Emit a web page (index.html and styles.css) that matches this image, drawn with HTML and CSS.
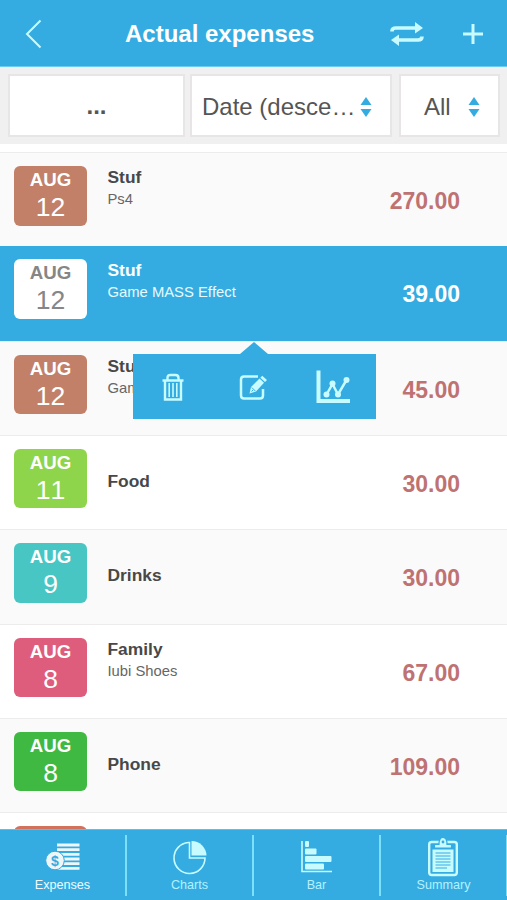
FILE: index.html
```html
<!DOCTYPE html>
<html lang="en">
<head>
  <meta charset="UTF-8">
  <meta name="viewport" content="width=device-width, initial-scale=1.0">
  <title>Actual expenses</title>
  <link rel="stylesheet" href="styles.css">
</head>
<body>
  <div class="header">
    <svg class="back" width="18" height="30" viewBox="0 0 18 30"><path d="M15.500 1.500L2 15L15.500 28.500"/></svg>
    <h1>Actual expenses</h1>
    <svg class="repeat" width="34" height="26" viewBox="0 0 34 26">
      <path class="line" d="M2 10.500V10Q2 7 6 7H26M32 15.500Q32 19 28 19H9"/>
      <path class="fill" d="M25 1L33 7L25 12.500ZM9 13.500L1 19L9 25Z"/>
    </svg>
    <svg class="plus" width="20" height="20" viewBox="0 0 20 20"><path d="M10 0V20M0 10H20"/></svg>
  </div>

  <div class="filters">
    <div class="box search">...</div>
    <div class="box sort">
      <span>Date (desce…</span>
      <svg width="12" height="20" viewBox="0 0 12 20"><path d="M6 0L11.500 8H0.500ZM6 20L11.500 12H0.500Z"/></svg>
    </div>
    <div class="box type">
      <span>All</span>
      <svg width="12" height="20" viewBox="0 0 12 20"><path d="M6 0L11.500 8H0.500ZM6 20L11.500 12H0.500Z"/></svg>
    </div>
  </div>

  <div class="list">
    <div class="row odd">
      <div class="date brown"><b>AUG</b><span>12</span></div>
      <div class="info"><b>Stuf</b><span>Ps4</span></div>
      <div class="amount">270.00</div>
    </div>
    <div class="row selected">
      <div class="date"><b>AUG</b><span>12</span></div>
      <div class="info"><b>Stuf</b><span>Game MASS Effect</span></div>
      <div class="amount">39.00</div>
      <div class="popup">
        <svg width="22" height="28" viewBox="0 0 22 28">
          <path class="line" stroke-width="2.400" d="M0.500 7.500H21.500M5.500 7V5Q5.500 2 8.500 2H13.500Q16.500 2 16.500 5V7M3 8V26.500H19V8"/>
          <path class="line" stroke-width="1.600" d="M7.200 10V24M11 10V24M14.800 10V24"/>
        </svg>
        <svg width="28" height="28" viewBox="0 0 28 28">
          <path class="line" stroke-width="2.500" d="M19 3.500H5Q2 3.500 2 6.500V22.500Q2 25.500 5 25.500H21Q24 25.500 24 22.500V16"/>
          <path class="fill" d="M10.500 20.500L12 14L20.500 5.500L25 9.700L17 18.500ZM21.300 4.700L23.200 2.800L28 7L26 9Z"/>
          <path class="cut" d="M12.800 14.500L16.300 18M12.500 18.500L14 17"/>
        </svg>
        <svg width="34" height="34" viewBox="0 0 34 34">
          <path class="line" stroke-width="4" d="M2.500 0.500V31H34"/>
          <path class="line" stroke-width="2.500" d="M10.500 24.500L16.500 14L22 24.500L30.500 10"/>
          <g class="fill"><circle cx="10.500" cy="24.500" r="3"/><circle cx="16.500" cy="13.500" r="3"/><circle cx="22" cy="24.500" r="3"/><circle cx="30.500" cy="10" r="3"/></g>
        </svg>
      </div>
    </div>
    <div class="row odd">
      <div class="date brown"><b>AUG</b><span>12</span></div>
      <div class="info"><b>Stuf</b><span>Game</span></div>
      <div class="amount">45.00</div>
    </div>
    <div class="row">
      <div class="date lime"><b>AUG</b><span>11</span></div>
      <div class="info single"><b>Food</b></div>
      <div class="amount">30.00</div>
    </div>
    <div class="row odd">
      <div class="date teal"><b>AUG</b><span>9</span></div>
      <div class="info single"><b>Drinks</b></div>
      <div class="amount">30.00</div>
    </div>
    <div class="row">
      <div class="date pink"><b>AUG</b><span>8</span></div>
      <div class="info"><b>Family</b><span>Iubi Shoes</span></div>
      <div class="amount">67.00</div>
    </div>
    <div class="row odd">
      <div class="date green"><b>AUG</b><span>8</span></div>
      <div class="info single"><b>Phone</b></div>
      <div class="amount">109.00</div>
    </div>
    <div class="row">
      <div class="date red"></div>
    </div>
  </div>

  <div class="tabs">
    <div class="tab active">
      <svg width="36" height="40" viewBox="0 0 36 40">
        <path class="line" stroke-width="2.800" d="M12 8H34.500M12 12.700H34.500M12 17.400H34.500M12 22H34.500M12 26.700H34.500M12 31.300H34.500"/>
        <circle class="coin" cx="10" cy="23.500" r="9.300"/>
        <text x="10" y="28.500">$</text>
      </svg>
      <span>Expenses</span>
    </div>
    <div class="tab">
      <svg width="36" height="40" viewBox="0 0 36 40">
        <path class="line" stroke-width="1.600" d="M16.500 5.500A15.500 15.500 0 1 0 33 21H17.500V5.500Z"/>
        <path class="fill" d="M19.500 4A15 15 0 0 1 34.500 18.500H19.500Z"/>
      </svg>
      <span>Charts</span>
    </div>
    <div class="tab">
      <svg width="36" height="40" viewBox="0 0 36 40">
        <path class="line" stroke-width="1.600" d="M3 4V34.500H33"/>
        <g class="fill">
          <rect x="6" y="4" width="4" height="6" rx="1"/>
          <rect x="6" y="11.500" width="11.500" height="6" rx="1"/>
          <rect x="6" y="19" width="26.500" height="6" rx="1"/>
          <rect x="6" y="26.500" width="19" height="6" rx="1"/>
        </g>
      </svg>
      <span>Bar</span>
    </div>
    <div class="tab">
      <svg width="36" height="40" viewBox="0 0 36 40">
        <rect class="line" stroke-width="2.400" x="4.200" y="5" width="27.600" height="33" rx="2.500"/>
        <rect class="fill" x="7.500" y="12.500" width="21" height="22.500"/>
        <path class="fill cutout" d="M9.500 11V7.500H14Q14 0.500 18 0.500T22 7.500H26.500V11Z"/>
        <circle class="hole" cx="18" cy="5" r="1.400"/>
        <path class="lines" d="M10.500 16H25.500M10.500 19H25.500M10.500 22H25.500M10.500 25H25.500M10.500 28H25.500M10.500 31H22"/>
      </svg>
      <span>Summary</span>
    </div>
  </div>
</body>
</html>
```
FILE: styles.css
```css
* {
  box-sizing: border-box;
}
body {
  margin: 0;
  height: 900px;
  display: flex;
  flex-direction: column;
  overflow: hidden;
  background-color: white;
  font-family: "Liberation Sans", Arial, sans-serif;
  font-kerning: none;
  color: #484848;
}
svg {
  display: block;
  flex: none;
}
.line {
  fill: none;
  stroke: #c8fbff;
}
.fill {
  fill: #c8fbff;
}

/* header */
.header {
  flex: none;
  height: 67px;
  display: flex;
  align-items: center;
  padding: 1px 24px 0 25px;
  background-color: #34ace1;
  border-bottom: 1px solid #6bcdf2;
}
.header h1 {
  margin: 0 0 0 82px;
  width: 191px;
  font-size: 24px;
  line-height: 30px;
  color: white;
  white-space: nowrap;
}
.back path {
  fill: none;
  stroke: #c8fbff;
  stroke-width: 2;
}
.repeat {
  margin-left: 74px;
}
.repeat .line {
  stroke-width: 3.6;
}
.plus {
  margin-left: auto;
}
.plus path {
  stroke: #c8fbff;
  stroke-width: 3;
}

/* filters */
.filters {
  flex: none;
  height: 77px;
  display: flex;
  padding: 7px 7px 7px 8px;
  background-color: #f1f0f0;
}
.box {
  height: 63px;
  display: flex;
  align-items: center;
  justify-content: space-between;
  background-color: white;
  border: 2px solid #e8e5e6;
  font-size: 24px;
  line-height: 28px;
  color: #555;
}
.box svg {
  fill: #34ace1;
}
.search {
  width: 177px;
  justify-content: center;
  padding-top: 1px;
  font-weight: bold;
}
.sort {
  width: 202px;
  margin-left: 5px;
  padding: 2px 18px 0 10px;
}
.sort span {
  white-space: nowrap;
}
.type {
  width: 101px;
  margin-left: 7px;
  padding: 2px 18px 0 23px;
}

/* expenses list */
.list {
  flex: 1;
  min-height: 0;
  padding-top: 8px;
  overflow: hidden;
}
.row {
  position: relative;
  height: 94.33px;
  display: flex;
  align-items: flex-start;
  padding: 13px 47px 0 14px;
  border-top: 1px solid #ececec;
}
.odd {
  background-color: #fafafa;
}
.selected {
  background-color: #34ace1;
  border-top: 0;
  color: white;
}
.date {
  width: 73px;
  height: 59.5px;
  border-radius: 6px;
  text-align: center;
  color: white;
}
.date b,
.date span,
.info b,
.info span {
  display: block;
}
.date b {
  font-size: 18.7px;
  line-height: 28px;
}
.date span {
  font-size: 26.5px;
  line-height: 26px;
}
.selected .date {
  background-color: white;
  color: #868686;
}
.brown {
  background-color: #c28069;
}
.lime {
  background-color: #8fd54b;
}
.teal {
  background-color: #48c6c3;
}
.pink {
  background-color: #df5d7c;
}
.green {
  background-color: #3fb942;
}
.red {
  background-color: #d2715c;
}
.info {
  margin-left: 20.5px;
  white-space: nowrap;
}
.info b {
  font-size: 17.4px;
  line-height: 22px;
}
.info span {
  font-size: 14.8px;
  line-height: 22px;
  color: #666;
}
.selected .info span {
  color: #e8faff;
}
.single {
  padding-top: 21px;
}
.amount {
  margin-left: auto;
  padding-top: 21px;
  font-size: 23px;
  font-weight: bold;
  line-height: 28px;
  color: #bf7272;
}
.selected .amount {
  color: white;
}
.popup {
  position: absolute;
  left: 132.5px;
  top: 108px;
  z-index: 1;
  width: 243px;
  height: 65px;
  display: grid;
  grid-template-columns: repeat(3, 1fr);
  align-items: center;
  justify-items: center;
  padding-right: 2px;
  background-color: #34ace1;
}
.popup::before {
  content: "";
  position: absolute;
  left: 107px;
  top: -12px;
  border-left: 14px solid transparent;
  border-right: 14px solid transparent;
  border-bottom: 12px solid #34ace1;
}
.popup .cut {
  stroke: #34ace1;
  stroke-width: 1;
}

/* bottom tabs */
.tabs {
  flex: none;
  height: 71px;
  display: grid;
  grid-template-columns: repeat(4, 127px);
  padding: 5px 0 4px;
  background-color: #34ace1;
  border-top: 1px solid #7fb4cb;
}
.tab {
  display: flex;
  flex-direction: column;
  align-items: center;
  padding-top: 2px;
  border-right: 2px solid #7de0fb;
  font-size: 12.6px;
  line-height: 16px;
  color: #b5f1ff;
}
.tab:last-child svg {
  margin-left: -1px;
}
.active {
  color: #f1fbff;
}
.active .line {
  stroke: #eef6f8;
}
.coin {
  fill: #eef6f8;
  stroke: #34ace1;
  stroke-width: 1;
}
.tab text {
  fill: #34ace1;
  font-size: 14px;
  font-weight: bold;
  text-anchor: middle;
}
.cutout {
  stroke: #34ace1;
  stroke-width: 1.2;
}
.hole {
  fill: #34ace1;
}
.lines {
  stroke: #34ace1;
  stroke-width: 1;
}
```
